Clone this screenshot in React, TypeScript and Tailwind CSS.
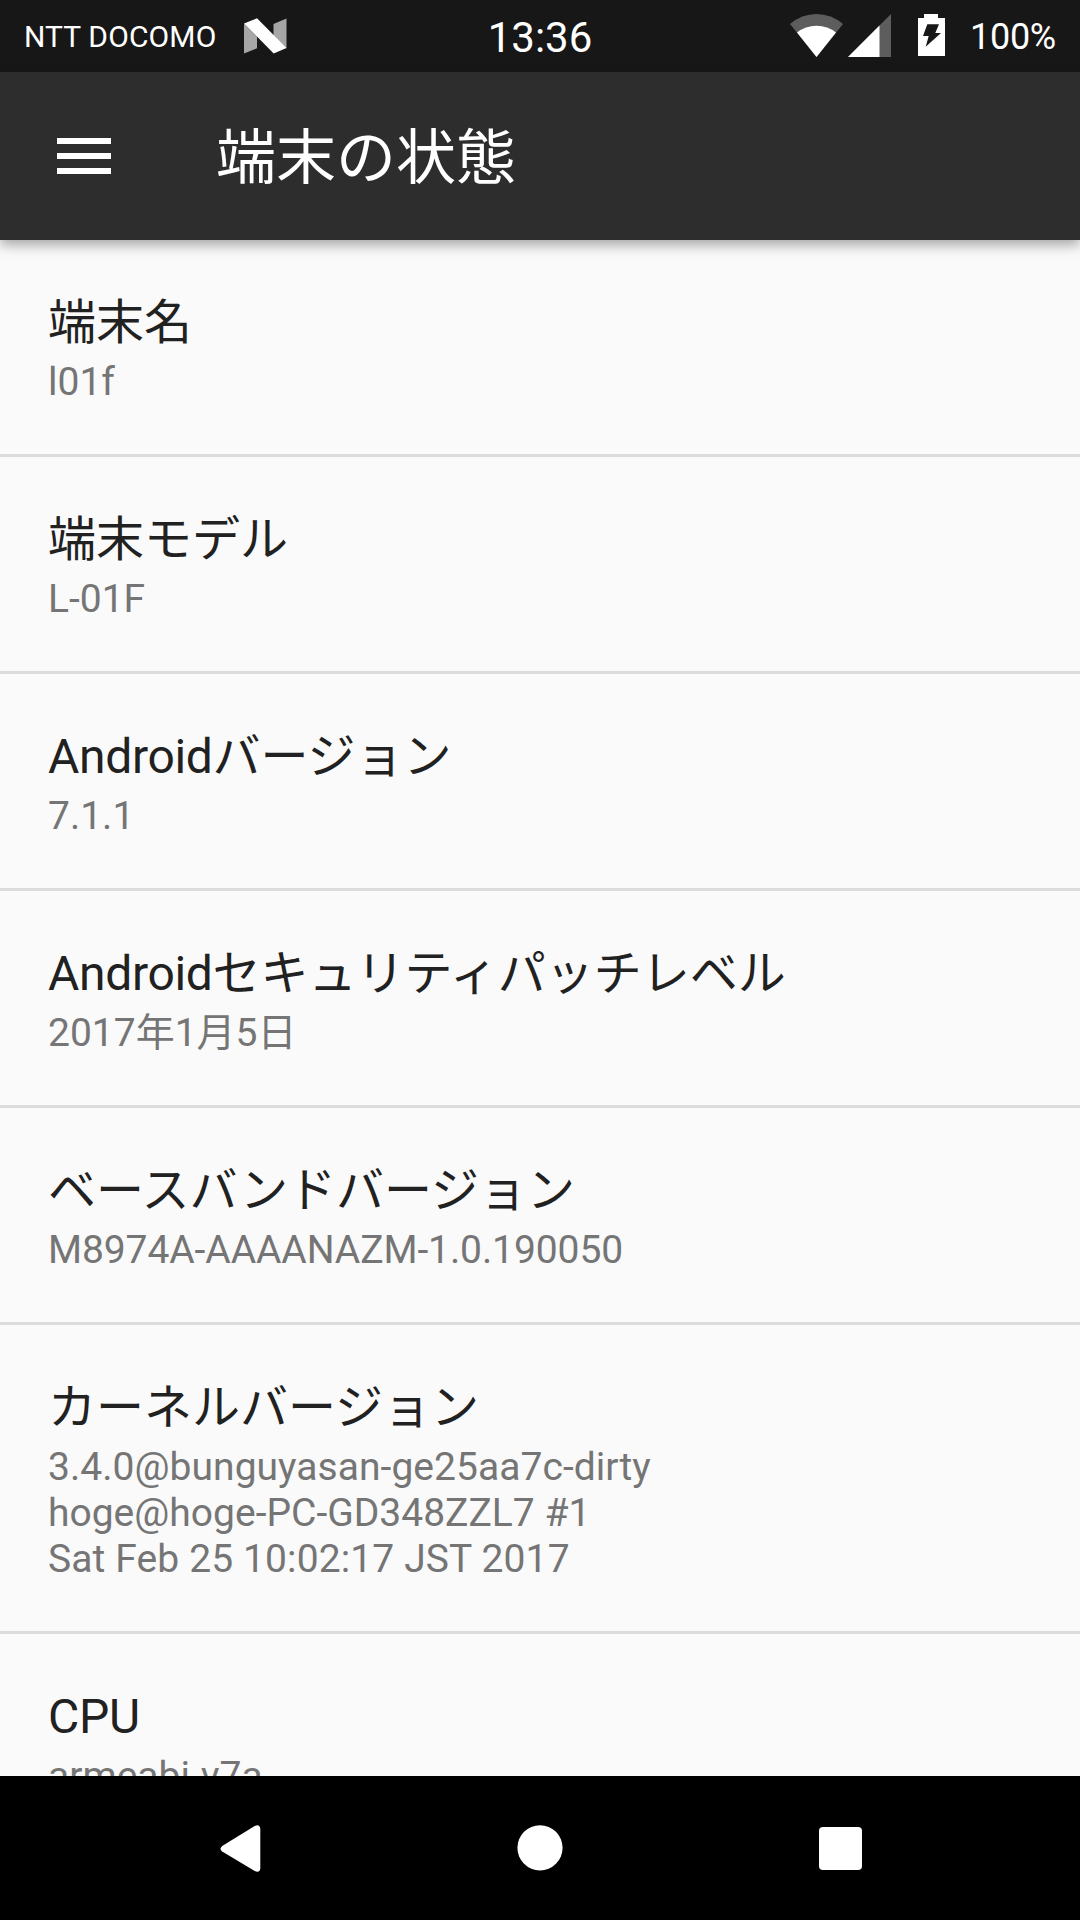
import React from 'react';

type Line = { text: string; tracking?: string };
type Entry = { title: string; latin?: string; lines: Line[] };

const entries: Entry[] = [
  { title: '端末名', lines: [{ text: 'l01f' }] },
  { title: '端末モデル', lines: [{ text: 'L-01F' }] },
  { latin: 'Android', title: 'バージョン', lines: [{ text: '7.1.1' }] },
  { latin: 'Android', title: 'セキュリティパッチレベル', lines: [{ text: '2017年1月5日' }] },
  {
    title: 'ベースバンドバージョン',
    lines: [{ text: 'M8974A-AAAANAZM-1.0.190050', tracking: 'tracking-[-0.09px]' }],
  },
  {
    title: 'カーネルバージョン',
    lines: [
      { text: '3.4.0@bunguyasan-ge25aa7c-dirty', tracking: 'tracking-[0.04px]' },
      { text: 'hoge@hoge-PC-GD348ZZL7 #1' },
      { text: 'Sat Feb 25 10:02:17 JST 2017', tracking: 'tracking-[0.12px]' },
    ],
  },
  { latin: 'CPU', title: '', lines: [{ text: 'armeabi-v7a' }] },
];

function NougatIcon() {
  return (
    <svg className="ml-[28px] h-[36px] w-[43px] shrink-0" viewBox="0 0 43 36">
      <path d="M0 5.5 13 18.5V30.3L0 35.5Z" fill="#a6a6a6" />
      <path d="M42.5 .5V30.5L29.5 18V6Z" fill="#a6a6a6" />
      <path d="M0 5.5 13 .3 42.5 30 29.7 35.5Z" fill="#fff" />
    </svg>
  );
}

function WifiIcon() {
  return (
    <svg className="h-[43px] w-[53px]" viewBox="0 0 53 43">
      <path d="M26.5 43 0 10Q11.7 0 26.5 0T53 10Z" fill="#5d5d5d" />
      <path d="M26.5 43 7 18.5Q15.5 11.7 26.5 11.7T46 18.5Z" fill="#fff" />
    </svg>
  );
}

function SignalIcon() {
  return (
    <svg className="ml-[5px] h-[43px] w-[43px]" viewBox="0 0 43 43">
      <path d="M0 43 43 0V43Z" fill="#5d5d5d" />
      <path d="M0 43 31.5 11.5V43Z" fill="#fff" />
    </svg>
  );
}

function BatteryIcon() {
  return (
    <svg className="ml-[27px] h-[42px] w-[27px]" viewBox="0 0 27 42">
      <path d="M6 0H20V4H27V42H0V4H6Z" fill="#fff" />
      <path d="M9.3 10.3H21L17.3 19H23L7.7 32.7 10.7 22H5Z" fill="#171717" />
    </svg>
  );
}

function StatusBar() {
  return (
    <div className="grid h-[72px] grid-cols-3 bg-[#171717] text-white">
      <div className="flex pl-[24px]">
        <span className="pt-[19px] text-[30px] leading-[36px] tracking-[0.12px] whitespace-nowrap">NTT DOCOMO</span>
        <div className="pt-[18px]">
          <NougatIcon />
        </div>
      </div>
      <div className="pt-[13px] text-center text-[42px] leading-[50px]">13:36</div>
      <div className="flex justify-end pr-[24px]">
        <div className="flex items-start pt-[14px]">
          <WifiIcon />
          <SignalIcon />
          <BatteryIcon />
        </div>
        <span className="ml-[25px] pt-[16px] text-[36px] leading-[42px] tracking-[-0.25px]">100%</span>
      </div>
    </div>
  );
}

function AppBar() {
  return (
    <header className="relative z-10 flex h-[168px] items-center bg-[#2d2d2d] pl-[57px] text-white shadow-[0_5px_12px_rgba(0,0,0,0.34)]">
      <button className="flex h-[36px] w-[54px] flex-col justify-between" aria-label="メニュー">
        <span className="h-[6px] w-full bg-white" />
        <span className="h-[6px] w-full bg-white" />
        <span className="h-[6px] w-full bg-white" />
      </button>
      <h1 className="ml-[105px] pt-[5px] text-[60px] leading-[70px]">端末の状態</h1>
    </header>
  );
}

function Row({ title, latin, lines }: Entry) {
  return (
    <li className="shrink-0 border-b-[3px] border-[#dcdcdc] px-[48px] pt-[55px] pb-[49px]">
      <div className="text-[48px] leading-[56px] text-[#212121]">
        {latin && <span className="tracking-[-0.32px]">{latin}</span>}
        {title}
      </div>
      <div className="mt-2 text-[39px] leading-[46px] text-[#757575]">
        {lines.map(({ text, tracking }) => (
          <div key={text} className={tracking}>
            {text}
          </div>
        ))}
      </div>
    </li>
  );
}

function NavBar() {
  return (
    <nav className="flex h-[144px] items-center justify-center bg-black">
      <div className="flex w-[300px] justify-center">
        <svg className="h-[48px] w-[42px]" viewBox="0 0 42 48">
          <path
            d="M3.2 21.9 35.7 1.9Q40.8-.2 41.3 4.8V44.2Q40.8 49.2 35.7 47.1L3.2 27.6Q-.2 24.7 3.2 21.9Z"
            fill="#fff"
          />
        </svg>
      </div>
      <div className="flex w-[300px] justify-center">
        <svg className="h-[48px] w-[48px]" viewBox="0 0 48 48">
          <circle cx="24" cy="23.8" r="22.6" fill="#fff" />
        </svg>
      </div>
      <div className="flex w-[300px] justify-center">
        <span className="size-[43px] rounded-[4px] bg-white" />
      </div>
    </nav>
  );
}

export default function App() {
  return (
    <div
      lang="ja"
      className="flex h-[1920px] w-[1080px] flex-col overflow-hidden bg-[#fafafa] font-['Roboto','Noto_Sans_CJK_JP',sans-serif]"
    >
      <StatusBar />
      <AppBar />
      <ul className="flex min-h-0 flex-1 flex-col overflow-hidden">
        {entries.map((entry) => (
          <Row key={(entry.latin ?? '') + entry.title} {...entry} />
        ))}
      </ul>
      <NavBar />
    </div>
  );
}
